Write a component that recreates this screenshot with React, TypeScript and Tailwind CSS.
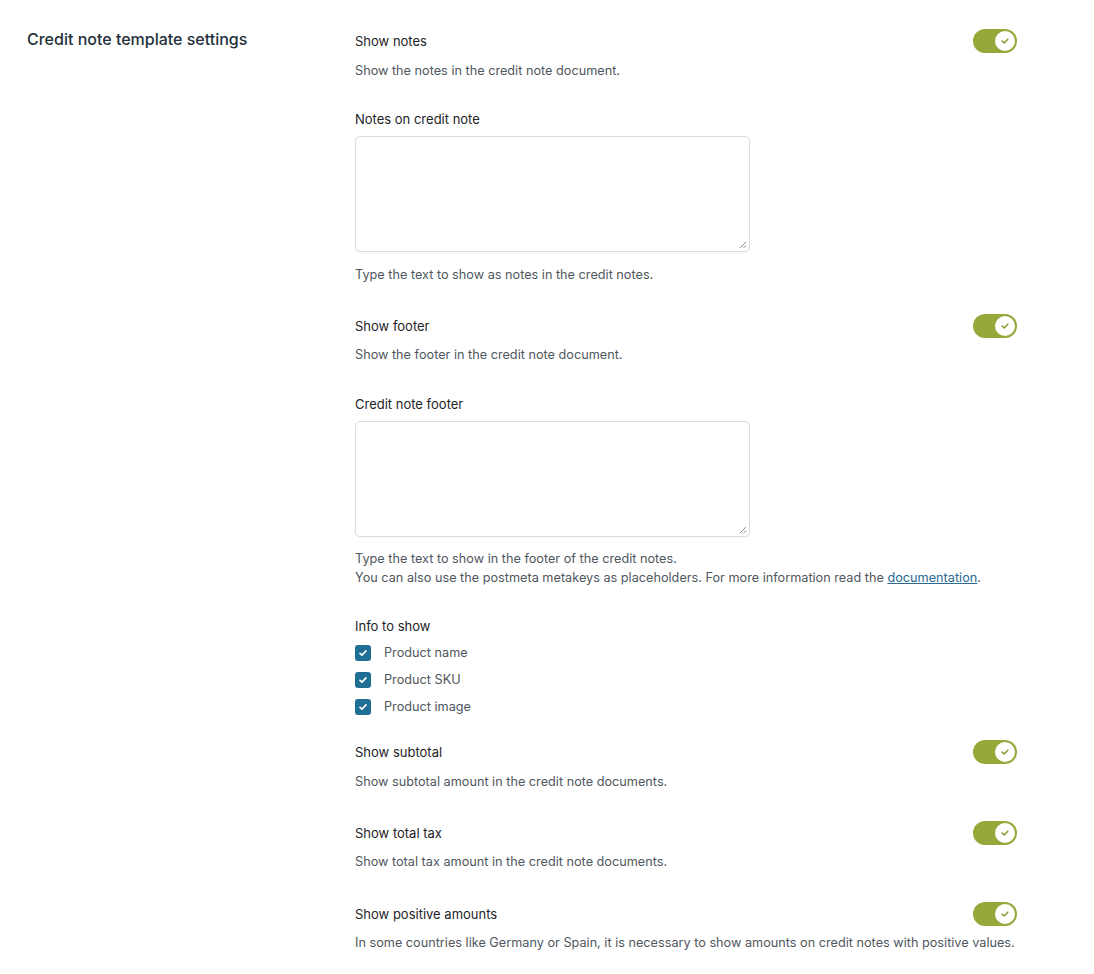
import React from "react";

const Toggle = () => (
  <div className="relative w-[44px] h-[24px] rounded-full bg-[#97a83a] shrink-0">
    <div className="absolute right-[2px] top-[2px] w-[20px] h-[20px] rounded-full bg-white flex items-center justify-center">
      <svg width="10" height="10" viewBox="0 0 10 10" fill="none">
        <path d="M2.2 5.2 L4.2 7 L7.8 3.2" stroke="#8a9c33" strokeWidth="1.6" strokeLinecap="round" strokeLinejoin="round" />
      </svg>
    </div>
  </div>
);

const Check = ({ label }: { label: string }) => (
  <div className="flex items-center h-[27px]">
    <div className="w-[16px] h-[16px] rounded-[3px] bg-[#1f6f94] flex items-center justify-center">
      <svg width="10" height="10" viewBox="0 0 10 10" fill="none">
        <path d="M2 5.3 L4 7.2 L8 2.9" stroke="white" strokeWidth="1.7" strokeLinecap="round" strokeLinejoin="round" />
      </svg>
    </div>
    <span className="ml-[13px] text-[12.7px] leading-[20px] text-[#50575e]">{label}</span>
  </div>
);

const ToggleRow = ({ label }: { label: string }) => (
  <div className="flex items-center justify-between h-[24px]">
    <span className="text-[13px] leading-[20px] text-[#1d2327]">{label}</span>
    <Toggle />
  </div>
);

const Desc = ({ children, className = "" }: { children: React.ReactNode; className?: string }) => (
  <p className={"text-[12.7px] leading-[19px] text-[#50575e] " + className}>{children}</p>
);

const TextArea = () => (
  <div className="relative mt-[7px] w-[395px] h-[116px] rounded-[5px] border border-[#dcdcde] bg-white shadow-[0_1px_1px_rgba(0,0,0,0.03)]">
    <svg className="absolute right-[2px] bottom-[2px]" width="9" height="9" viewBox="0 0 9 9">
      <path d="M8 2 L2 8 M8 5.5 L5.5 8" stroke="#8c8f94" strokeWidth="1" />
    </svg>
  </div>
);

export default function App() {
  return (
    <div className="w-[1094px] h-[974px] bg-white overflow-hidden" style={{ fontFamily: "Inter, 'Noto Sans', sans-serif" }}>
      <div className="flex pt-[29px]">
        <div className="w-[355px] pl-[27px]">
          <h2 className="text-[16px] leading-[20px] font-medium text-[#23303b]">Credit note template settings</h2>
        </div>
        <div className="w-[662px]">
          <ToggleRow label="Show notes" />
          <Desc className="mt-[8px]">Show the notes in the credit note document.</Desc>

          <div className="mt-[29px] text-[13px] leading-[20px] text-[#1d2327]">Notes on credit note</div>
          <TextArea />
          <Desc className="mt-[13px]">Type the text to show as notes in the credit notes.</Desc>

          <div className="mt-[30px]">
            <ToggleRow label="Show footer" />
          </div>
          <Desc className="mt-[7px]">Show the footer in the credit note document.</Desc>

          <div className="mt-[30px] text-[13px] leading-[20px] text-[#1d2327]">Credit note footer</div>
          <TextArea />
          <Desc className="mt-[12px]">
            Type the text to show in the footer of the credit notes.
            <br />
            You can also use the postmeta metakeys as placeholders. For more information read the{" "}
            <a className="text-[#2a6a94] underline">documentation</a>.
          </Desc>

          <div className="mt-[29px] text-[13px] leading-[20px] text-[#1d2327]">Info to show</div>
          <div className="mt-[3px]">
            <Check label="Product name" />
            <Check label="Product SKU" />
            <Check label="Product image" />
          </div>

          <div className="mt-[20px]">
            <ToggleRow label="Show subtotal" />
          </div>
          <Desc className="mt-[8px]">Show subtotal amount in the credit note documents.</Desc>

          <div className="mt-[30px]">
            <ToggleRow label="Show total tax" />
          </div>
          <Desc className="mt-[7px]">Show total tax amount in the credit note documents.</Desc>

          <div className="mt-[31px]">
            <ToggleRow label="Show positive amounts" />
          </div>
          <Desc className="mt-[7px]">
            In some countries like Germany or Spain, it is necessary to show amounts on credit notes with positive values.
          </Desc>
        </div>
      </div>
    </div>
  );
}
